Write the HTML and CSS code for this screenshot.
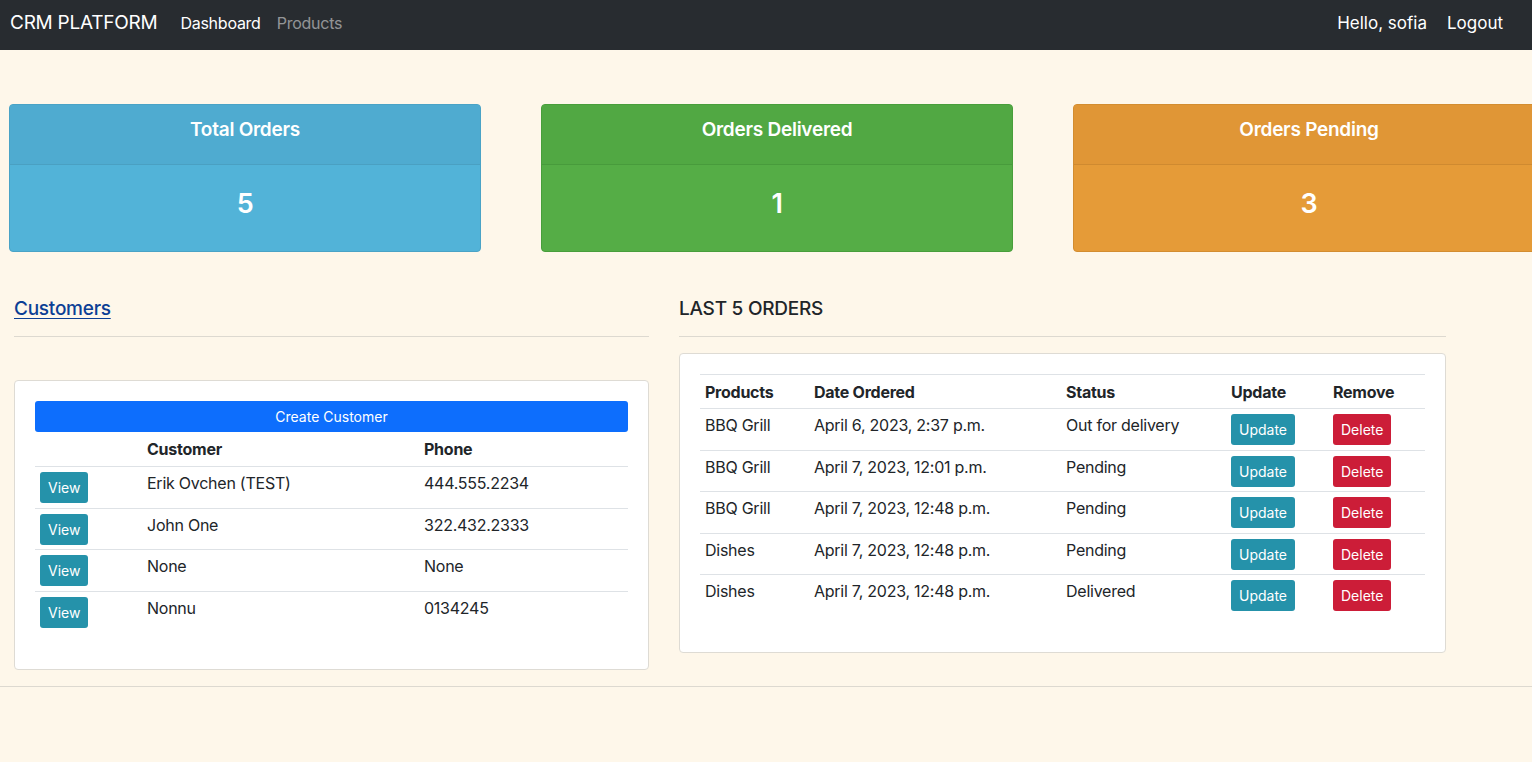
FILE: index.html
```html
<!DOCTYPE html>
<html lang="en">
<head>
<meta charset="utf-8">
<title>CRM Platform</title>
<link rel="stylesheet" href="styles.css">
</head>
<body>
<nav class="navbar">
  <a class="brand" href="#">CRM PLATFORM</a>
  <ul class="nav-links">
    <li><a class="nav-link active" href="#">Dashboard</a></li>
    <li><a class="nav-link muted" href="#">Products</a></li>
  </ul>
  <div class="nav-right">
    <span class="nav-link active">Hello, sofia</span>
    <a class="nav-link active" href="#">Logout</a>
  </div>
</nav>

<main class="page">
  <section class="stats">
    <div class="stat stat-info">
      <div class="stat-head">Total Orders</div>
      <div class="stat-body">5</div>
    </div>
    <div class="stat stat-success">
      <div class="stat-head">Orders Delivered</div>
      <div class="stat-body">1</div>
    </div>
    <div class="stat stat-warning">
      <div class="stat-head">Orders Pending</div>
      <div class="stat-body">3</div>
    </div>
  </section>

  <section class="panels">
    <div class="col col-left">
      <h5 class="section-title"><a href="#" class="title-link">Customers</a></h5>
      <hr class="rule">
      <div class="card card-customers">
        <a href="#" class="btn btn-primary btn-block">Create Customer</a>
        <table class="table cust-table">
          <thead>
            <tr><th class="c1"></th><th class="c2">Customer</th><th class="c3">Phone</th></tr>
          </thead>
          <tbody>
            <tr><td><a class="btn btn-info" href="#">View</a></td><td>Erik Ovchen (TEST)</td><td>444.555.2234</td></tr>
            <tr><td><a class="btn btn-info" href="#">View</a></td><td>John One</td><td>322.432.2333</td></tr>
            <tr><td><a class="btn btn-info" href="#">View</a></td><td>None</td><td>None</td></tr>
            <tr><td><a class="btn btn-info" href="#">View</a></td><td>Nonnu</td><td>0134245</td></tr>
          </tbody>
        </table>
      </div>
    </div>

    <div class="col col-right">
      <h5 class="section-title">LAST 5 ORDERS</h5>
      <hr class="rule">
      <div class="card card-orders">
        <table class="table order-table">
          <thead>
            <tr><th class="o1">Products</th><th class="o2">Date Ordered</th><th class="o3">Status</th><th class="o4">Update</th><th class="o5">Remove</th></tr>
          </thead>
          <tbody>
            <tr><td>BBQ Grill</td><td>April 6, 2023, 2:37 p.m.</td><td>Out for delivery</td><td><a class="btn btn-info" href="#">Update</a></td><td><a class="btn btn-danger" href="#">Delete</a></td></tr>
            <tr><td>BBQ Grill</td><td>April 7, 2023, 12:01 p.m.</td><td>Pending</td><td><a class="btn btn-info" href="#">Update</a></td><td><a class="btn btn-danger" href="#">Delete</a></td></tr>
            <tr><td>BBQ Grill</td><td>April 7, 2023, 12:48 p.m.</td><td>Pending</td><td><a class="btn btn-info" href="#">Update</a></td><td><a class="btn btn-danger" href="#">Delete</a></td></tr>
            <tr><td>Dishes</td><td>April 7, 2023, 12:48 p.m.</td><td>Pending</td><td><a class="btn btn-info" href="#">Update</a></td><td><a class="btn btn-danger" href="#">Delete</a></td></tr>
            <tr><td>Dishes</td><td>April 7, 2023, 12:48 p.m.</td><td>Delivered</td><td><a class="btn btn-info" href="#">Update</a></td><td><a class="btn btn-danger" href="#">Delete</a></td></tr>
          </tbody>
        </table>
      </div>
    </div>
  </section>
  <hr class="page-rule">
</main>
</body>
</html>
```

FILE: styles.css
```css
* { box-sizing: border-box; }

html, body {
  margin: 0;
  padding: 0;
  overflow-x: hidden;
}

body {
  background: #fef7ea;
  color: #212529;
  font-family: Inter, "Noto Sans", "Liberation Sans", sans-serif;
  font-size: 16px;
  line-height: 24px;
  letter-spacing: -0.25px;
}

a { text-decoration: none; }

/* Navbar */
.navbar {
  display: flex;
  align-items: center;
  height: 50px;
  padding: 0 29px 4px 10px;
  background: #282c30;
}

.brand {
  color: #fff;
  font-size: 19px;
  line-height: 30px;
  margin-right: 23px;
}

.nav-links {
  display: flex;
  gap: 16px;
  list-style: none;
  margin: 0;
  padding: 0;
}

.nav-link {
  font-size: 16px;
  line-height: 24px;
}

.nav-link.active { color: #fff; }
.nav-link.muted { color: rgba(255, 255, 255, 0.5); }

.nav-right {
  display: flex;
  gap: 20px;
  margin-left: auto;
}

.nav-right .nav-link { font-size: 17px; letter-spacing: 0; }

/* Stats */
.page { overflow: hidden; }

.stats {
  display: flex;
  gap: 60px;
  padding: 54px 0 0 9px;
  width: 1620px;
}

.stat {
  flex: 0 0 472px;
  border-radius: 4px;
  color: #fff;
  border: 1px solid;
  overflow: hidden;
}

.stat-head {
  height: 60px;
  padding-top: 13px;
  text-align: center;
  font-size: 19px;
  font-weight: 600;
  line-height: 24px;
  border-bottom: 1px solid;
}

.stat-body {
  height: 86px;
  padding-top: 21px;
  text-align: center;
  font-size: 27px;
  font-weight: 600;
  line-height: 36px;
}

.stat-info { background: #52b3d8; border-color: #4aa3c6; }
.stat-info .stat-head { background: #4fabd0; border-color: #4aa0c2; }
.stat-success { background: #55ad46; border-color: #489e3b; }
.stat-success .stat-head { background: #51a843; border-color: #489b3c; }
.stat-warning { background: #e59b38; border-color: #d38d30; }
.stat-warning .stat-head { background: #e09636; border-color: #cf8a30; }

/* Panels */
.panels {
  display: flex;
  gap: 30px;
  padding: 44px 0 0 14px;
  align-items: flex-start;
}

.col-left { flex: 0 0 635px; }
.col-right { flex: 0 0 767px; }

.section-title {
  margin: 0;
  font-size: 19px;
  font-weight: 500;
  line-height: 24px;
  padding-top: 1px;
}

.title-link {
  color: #0c3f95;
  text-decoration: underline;
  text-underline-offset: 3px;
}

.rule {
  margin: 15px 0 16px;
  border: 0;
  border-top: 1px solid #ddd9d0;
}

.card {
  background: #fff;
  border: 1px solid #dedbd4;
  border-radius: 4px;
  padding: 20px;
}

.card-customers { margin-top: 43px; }

.btn {
  display: inline-block;
  font-size: 14px;
  line-height: 21px;
  padding: 5px 8px;
  border-radius: 3px;
  color: #fff;
  vertical-align: middle;
  letter-spacing: 0;
}

.btn-block {
  display: block;
  text-align: center;
}

.btn-primary { background: #0d6efd; }
.btn-info { background: #2592aa; }
.btn-danger { background: #cc1d38; }

.table {
  width: 100%;
  border-collapse: collapse;
  margin-bottom: 16px;
  table-layout: fixed;
}

.table th,
.table td {
  text-align: left;
  vertical-align: top;
  padding: 5px 5px 4px;
  border-top: 1px solid #dee2e6;
  line-height: 24px;
}

.table th { font-weight: 700; }

.cust-table thead th { border-top: 0; padding-top: 5px; padding-bottom: 5px; }

.table tbody td { height: 41.6px; padding-top: 4px; }

.table tbody td .btn { margin-top: 1px; }

.c1 { width: 107px; }
.c2 { width: 277px; }
.c3 { width: auto; }

.o1 { width: 109px; }
.o2 { width: 252px; }
.o3 { width: 165px; }
.o4 { width: 102px; }
.o5 { width: auto; }

.page-rule {
  margin: 16px 0 0;
  border: 0;
  border-top: 1px solid #ddd9d0;
}
```
